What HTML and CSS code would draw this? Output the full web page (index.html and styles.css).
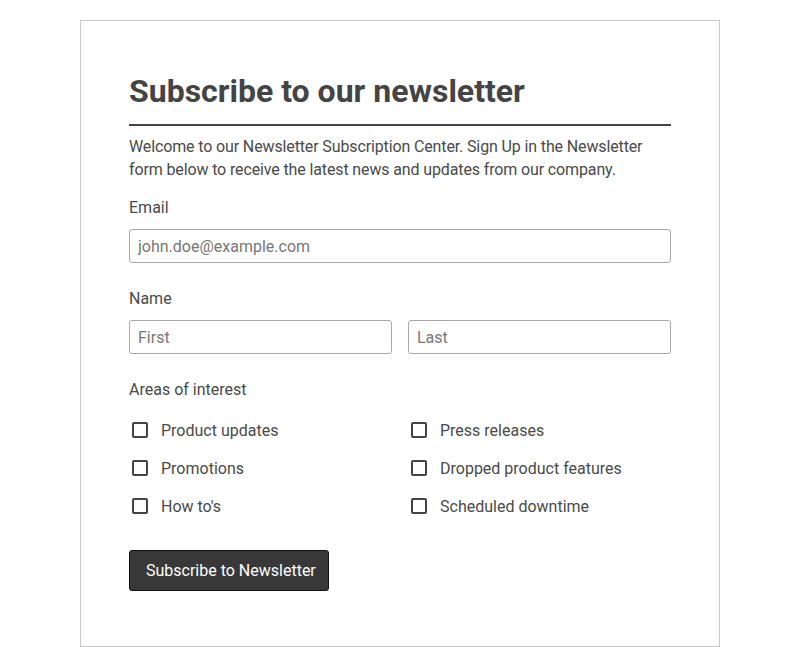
FILE: index.html
```html
<!DOCTYPE html>
<html>
<head>
    <title>Newsletter Subscription</title>
    <link rel="stylesheet" href="styles.css">
</head>
<body>
    <div class="card">
        <h1>Subscribe to our newsletter</h1>
        <p class="intro">Welcome to our Newsletter Subscription Center. Sign Up in the Newsletter form below to receive the latest news and updates from our company.</p>
        <form id="subscribeForm">
            <div class="form-group">
                <label for="email">Email</label>
                <input type="email" id="email" name="email" placeholder="john.doe@example.com">
            </div>
            <div class="form-group">
                <label for="first">Name</label>
                <div class="row">
                    <input type="text" id="first" name="first" placeholder="First">
                    <input type="text" id="last" name="last" placeholder="Last">
                </div>
            </div>
            <div class="form-group">
                <label>Areas of interest</label>
                <div class="interests">
                    <label class="check"><input type="checkbox" name="interest" value="updates"> Product updates</label>
                    <label class="check"><input type="checkbox" name="interest" value="press"> Press releases</label>
                    <label class="check"><input type="checkbox" name="interest" value="promotions"> Promotions</label>
                    <label class="check"><input type="checkbox" name="interest" value="dropped"> Dropped product features</label>
                    <label class="check"><input type="checkbox" name="interest" value="howto"> How to's</label>
                    <label class="check"><input type="checkbox" name="interest" value="downtime"> Scheduled downtime</label>
                </div>
            </div>
            <button type="submit">Subscribe to Newsletter</button>
        </form>
    </div>
</body>
</html>
```
FILE: styles.css
```css
body {
    font-family: Roboto, "Liberation Sans", sans-serif;
    color: #4a4a4a;
    margin: 0;
    padding: 20px 0;
    background: #fff;
}
.card {
    width: 542px;
    margin: 0 auto;
    padding: 48px 48px 55px;
    border: 1px solid #c8c8c8;
}
h1 {
    margin: 0 0 9px;
    font-size: 32px;
    line-height: 44px;
    font-weight: 700;
    color: #444;
    padding-bottom: 11px;
    border-bottom: 2px solid #444;
}
.intro {
    margin: 0 0 15px;
    font-size: 16px;
    line-height: 23px;
    letter-spacing: -0.13px;
}
.form-group {
    margin-bottom: 24px;
}
.form-group > label {
    display: block;
    font-size: 16px;
    line-height: 23px;
    margin-bottom: 10px;
}
input[type="email"], input[type="text"] {
    display: block;
    width: 100%;
    height: 34px;
    box-sizing: border-box;
    padding: 0 8px;
    font-family: inherit;
    font-size: 16px;
    color: #444;
    border: 1px solid #aaa;
    border-radius: 3px;
}
input::placeholder {
    color: #777;
}
.row {
    display: grid;
    grid-template-columns: 1fr 1fr;
    gap: 16px;
}
.interests {
    display: grid;
    grid-template-columns: 1fr 1fr;
    column-gap: 16px;
    margin-top: 7px;
}
.check {
    display: flex;
    align-items: center;
    height: 38px;
    font-size: 16px;
}
.check input {
    appearance: none;
    width: 16px;
    height: 16px;
    margin: 0 13px 0 3px;
    border: 2px solid #444;
    border-radius: 2px;
    box-sizing: border-box;
}
.form-group:last-of-type {
    margin-bottom: 25px;
}
button {
    width: 200px;
    height: 41px;
    padding: 0 0 0 16px;
    text-align: left;
    background-color: #383838;
    color: #fff;
    font-family: inherit;
    font-size: 16px;
    border: 1px solid #111;
    border-radius: 3px;
    cursor: pointer;
}
```
